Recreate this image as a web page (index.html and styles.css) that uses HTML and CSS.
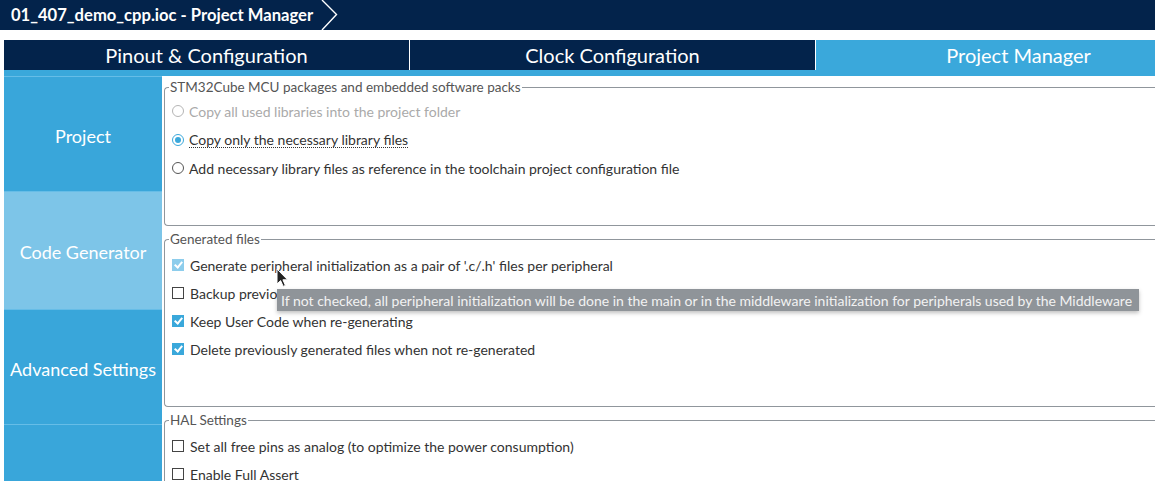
FILE: index.html
```html
<!DOCTYPE html>
<html lang="en">
<head>
  <meta charset="UTF-8">
  <title>01_407_demo_cpp.ioc - Project Manager</title>
  <link rel="stylesheet" href="styles.css">
</head>
<body>
<div class="app">

  <header class="topbar">
    <span class="crumb">01_407_demo_cpp.ioc - Project Manager</span>
    <svg class="chevron" width="18" height="30" viewBox="0 0 18 30">
      <polyline points="1,0 15.5,14.5 1,30" fill="none" stroke="#fff" stroke-width="1.4"/>
    </svg>
  </header>

  <nav class="tabs">
    <div class="tab">Pinout &amp; Configuration</div>
    <div class="tab">Clock Configuration</div>
    <div class="tab active">Project Manager</div>
  </nav>
  <div class="tab-strip"></div>

  <div class="workspace">
    <aside class="sidebar">
      <div class="side-item">Project</div>
      <div class="side-item current">Code Generator</div>
      <div class="side-item">Advanced Settings</div>
      <div class="side-item"></div>
    </aside>

    <main class="panel">
      <!-- packages -->
      <fieldset class="group group-packs">
        <legend>STM32Cube MCU packages and embedded software packs</legend>
        <div class="opt disabled"><span class="radio"></span>Copy all used libraries into the project folder</div>
        <div class="opt"><span class="radio on"></span><span class="focus">Copy only the necessary library files</span></div>
        <div class="opt"><span class="radio"></span>Add necessary library files as reference in the toolchain project configuration file</div>
      </fieldset>

      <!-- generated files -->
      <fieldset class="group group-files">
        <legend>Generated files</legend>
        <div class="opt"><span class="check on soft"></span>Generate peripheral initialization as a pair of '.c/.h' files per peripheral</div>
        <div class="opt"><span class="check"></span>Backup previously generated files when re-generating</div>
        <div class="opt"><span class="check on"></span>Keep User Code when re-generating</div>
        <div class="opt"><span class="check on"></span>Delete previously generated files when not re-generated</div>
      </fieldset>

      <!-- hal -->
      <fieldset class="group group-hal">
        <legend>HAL Settings</legend>
        <div class="opt"><span class="check"></span>Set all free pins as analog (to optimize the power consumption)</div>
        <div class="opt"><span class="check"></span>Enable Full Assert</div>
      </fieldset>
    </main>
  </div>

  <div class="tooltip">If not checked, all peripheral initialization will be done in the main or in the middleware initialization for peripherals used by the Middleware</div>

  <svg class="cursor" width="13" height="20" viewBox="0 0 13 20">
    <path d="M1 1 L1 16 L4.6 12.6 L7.2 18.4 L9.4 17.4 L6.9 11.8 L11.6 11.8 Z" fill="#222" stroke="#fff" stroke-width="1"/>
  </svg>
</div>
</body>
</html>
```

FILE: styles.css
```css
body {
  margin: 0;
  font-family: 'Lato', 'Noto Sans', sans-serif;
  color: #333;
  overflow: hidden; /* the app is wider than the window */
}

.app {
  position: relative;
  width: 1222px;
  height: 481px;
  overflow: hidden;
  background: #fff;
}

/* breadcrumb bar */
.topbar {
  height: 30px;
  background: #03234b;
  display: flex;
  align-items: center;
  padding-left: 11px;
}

.crumb {
  color: #fff;
  font-weight: bold;
  font-size: 16.6px;
}

.chevron {
  margin-left: 8px;
}

/* main tabs */
.tabs {
  display: grid;
  grid-template-columns: repeat(3, 405px);
  gap: 1px;
  margin: 10px 0 0 4px;
}

.tab {
  height: 30px;
  background: #03234b;
  color: #fff;
  font-size: 20px;
  display: flex;
  align-items: center;
  justify-content: center;
}

.tab.active {
  background: #3aa8db;
}

.tab-strip {
  height: 6px;
  margin-left: 4px;
  background: #3aa8db;
}

.workspace {
  display: flex;
  margin-left: 4px;
}

/* left menu */
.sidebar {
  width: 158px;
  flex-shrink: 0;
  background: #39a6da;
}

.side-item {
  height: 111px;
  padding-top: 3px;
  border-top: 1px solid #66bde7;
  display: flex;
  align-items: center;
  justify-content: center;
  color: #fff;
  font-size: 18px;
}

.side-item.current {
  height: 114px;
  background: #7dc5e8;
}

/* right panel */
.panel {
  flex: 1;
  padding: 2px 0 0 2px;
}

.group {
  margin: 0;
  border: 1px solid #90969c;
  border-right: none;
  border-radius: 4px 0 0 4px;
  padding: 0 0 0 4px;
  box-sizing: border-box;
}

.group legend {
  padding: 0 1px;
  font-size: 13.5px;
  line-height: 18px;
  color: #555;
}

.group-packs {
  height: 148px;
  padding-top: 1px;
}

.group-packs .opt {
  height: 28.5px;
}

.group-files {
  height: 177px;
  margin-top: 4px;
  padding-top: 3px;
}

.group-hal {
  height: 80px;
  margin-top: 4px;
  padding-top: 3px;
}

.opt {
  height: 28px;
  display: flex;
  align-items: center;
  padding-left: 3px;
  font-size: 14px;
  color: #333;
  white-space: nowrap;
}

.opt.disabled {
  color: #aaa;
}

.focus {
  border-bottom: 1px dotted #333;
  line-height: 15px;
}

.radio {
  width: 10px;
  height: 10px;
  border: 1px solid #555;
  border-radius: 50%;
  margin-right: 5px;
  flex-shrink: 0;
  position: relative;
}

.opt.disabled .radio {
  border-color: #b5b5b5;
}

.radio.on {
  border-color: #3aa8db;
}

.radio.on::after {
  content: "";
  position: absolute;
  left: 2px;
  top: 2px;
  width: 6px;
  height: 6px;
  border-radius: 50%;
  background: #3aa8db;
}

.check {
  width: 10px;
  height: 10px;
  border: 1px solid #444;
  margin-right: 6px;
  flex-shrink: 0;
  position: relative;
}

.check.on {
  background: #3aa8db;
  border-color: #3aa8db;
}

.check.on.soft {
  background: #8dcdec;
  border-color: #8dcdec;
}

.check.on::after {
  content: "";
  position: absolute;
  left: 3px;
  top: 0px;
  width: 3px;
  height: 6px;
  border: solid #fff;
  border-width: 0 2px 2px 0;
  transform: rotate(40deg);
}

/* hover popup */
.tooltip {
  position: absolute;
  left: 277px;
  top: 289px;
  width: 862px;
  height: 22px;
  box-sizing: border-box;
  padding-left: 4px;
  background: #8f9499;
  color: #f2f2f2;
  font-size: 14px;
  line-height: 23px;
  white-space: nowrap;
  overflow: hidden;
  box-shadow: 0 2px 4px rgba(0, 0, 0, 0.25);
}

.cursor {
  position: absolute;
  left: 276px;
  top: 268px;
}
```
